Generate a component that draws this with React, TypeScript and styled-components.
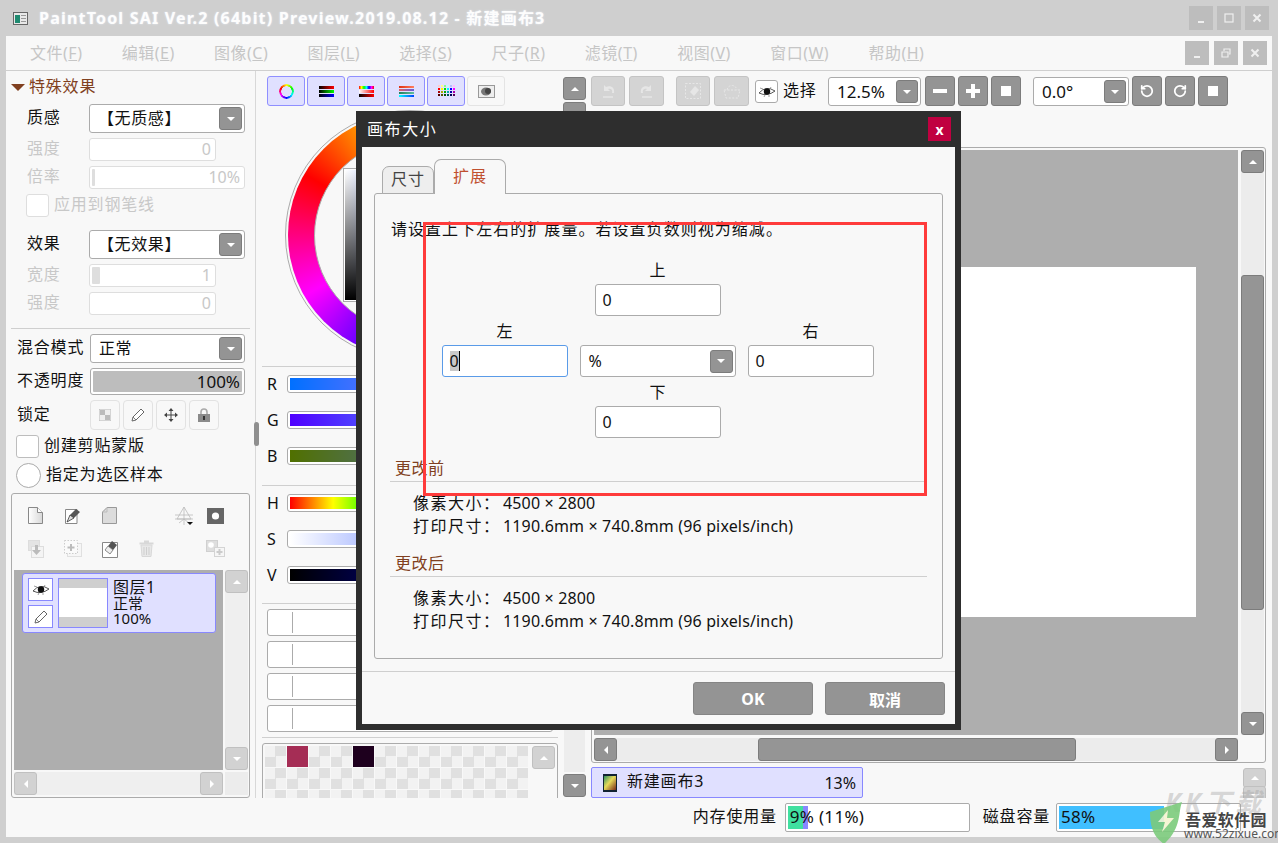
import React from "react";
import styled, { createGlobalStyle, css } from "styled-components";
import { RotateCcw, RotateCw } from "lucide-react";

const GlobalStyle = createGlobalStyle`
  * { box-sizing: border-box; }
  html, body { margin: 0; padding: 0; background: #cfcfcf; }
  body {
    font-family: "Noto Sans", "Noto Sans CJK SC", sans-serif;
    font-size: 16px;
    color: #111;
  }
`;

const line = "#ababab";
const paper = "#f8f8f8";
const btnGray = "#949494";

// ---- window frame
const Root = styled.div`
  position: relative;
  width: 1278px;
  height: 843px;
  overflow: hidden;
  padding: 0 6px 6px;
  display: flex;
  flex-direction: column;
  background: #cfcfcf;
`;
const TitleBar = styled.div`
  height: 36px;
  flex: none;
  display: flex;
  align-items: center;
  padding-left: 7px;
`;
const TitleText = styled.div`
  margin: 0 0 2px 11px;
  color: #fdfdfd;
  font-weight: 700;
  font-size: 16px;
  letter-spacing: 1.2px;
  text-shadow: 0 0 2px #e8eef8;
`;
const CaptionGroup = styled.div<{ $gap?: number; $right?: number }>`
  margin-left: auto;
  margin-right: ${(p) => p.$right ?? 3}px;
  display: flex;
  gap: ${(p) => p.$gap ?? 4}px;
`;
const CaptionBtn = styled.div`
  width: 24px;
  height: 24px;
  background: #bdbdbd;
  color: #efefef;
  display: flex;
  align-items: center;
  justify-content: center;
`;
const Client = styled.div`
  flex: 1;
  min-height: 0;
  background: ${paper};
  display: flex;
  flex-direction: column;
`;
const MenuBar = styled.div`
  height: 35px;
  flex: none;
  border-bottom: 1px solid #cfcfcf;
  display: flex;
  align-items: center;
  padding-left: 24px;
  gap: 39.25px;
  color: #c6c6c6;
  & u { text-decoration-thickness: 1px; }
`;
const MenuItem = styled.div`
  letter-spacing: 0.5px;
  margin-bottom: 2px;
`;
const Body = styled.div`
  height: 727px;
  flex: none;
  display: flex;
  overflow: hidden;
  position: relative;
`;

// ---- left panel
const LeftPanel = styled.div`
  width: 250px;
  flex: none;
  padding: 0 5px;
  border-right: 1px solid #d8d8d8;
  display: flex;
  flex-direction: column;
`;
const Row = styled.div<{ $top: number; $h: number; $indent?: number; $right?: number }>`
  margin-top: ${(p) => p.$top}px;
  height: ${(p) => p.$h}px;
  flex: none;
  display: flex;
  align-items: center;
  padding-left: ${(p) => p.$indent ?? 0}px;
  padding-right: ${(p) => p.$right ?? 0}px;
`;
const Cjk = styled.span<{ $w?: number; $off?: boolean; $color?: string }>`
  letter-spacing: 0.8px;
  white-space: nowrap;
  margin-bottom: 5px;
  ${(p) => p.$w && css`width: ${p.$w}px; flex: none;`}
  color: ${(p) => (p.$off ? "#c8c8c8" : p.$color ?? "#111")};
`;
const Triangle = styled.i`
  width: 0;
  height: 0;
  border-left: 7px solid transparent;
  border-right: 7px solid transparent;
  border-top: 7px solid #804020;
  margin-right: 4px;
`;
const SelectBox = styled.div<{ $w?: number; $ml?: number; $h?: number }>`
  ${(p) => (p.$w ? css`width: ${p.$w}px; flex: none;` : css`flex: 1;`)}
  margin-left: ${(p) => p.$ml ?? 0}px;
  height: ${(p) => (p.$h ? `${p.$h}px` : "100%")};
  background: #fff;
  border: 1px solid ${line};
  border-radius: 3px;
  display: flex;
  align-items: center;
  padding: 0 2px 0 8px;
`;
const SelectValue = styled.span<{ $cjk?: boolean }>`
  flex: 1;
  white-space: nowrap;
  ${(p) => p.$cjk && css`margin-bottom: 4px; letter-spacing: 0.6px;`}
`;
const DropBtn = styled.div<{ $w?: number }>`
  width: ${(p) => p.$w ?? 23}px;
  height: 23px;
  flex: none;
  background: ${btnGray};
  border: 1px solid #7c7c7c;
  border-radius: 3px;
  display: flex;
  align-items: center;
  justify-content: center;
  &::after {
    content: "";
    border-left: 4px solid transparent;
    border-right: 4px solid transparent;
    border-top: 4px solid #fff;
  }
`;
const ValueBar = styled.div<{ $w?: number; $strong?: boolean }>`
  ${(p) => (p.$w ? css`width: ${p.$w}px; flex: none;` : css`flex: 1;`)}
  height: 100%;
  border: 1px solid ${(p) => (p.$strong ? line : "#dedede")};
  border-radius: 3px;
  background: #fff;
  padding: 2px;
  position: relative;
  display: flex;
  align-items: center;
  justify-content: flex-end;
  color: ${(p) => (p.$strong ? "#111" : "#c8c8c8")};
  font-size: 16px;
`;
const BarFill = styled.div<{ $color: string; $w: string }>`
  position: absolute;
  left: 2px;
  top: 2px;
  bottom: 2px;
  width: ${(p) => p.$w};
  background: ${(p) => p.$color};
  border-radius: 1px;
`;
const BarText = styled.span<{ $big?: boolean }>`
  position: relative;
  padding-right: 2px;
  margin-bottom: 1px;
  ${(p) => p.$big && css`font-size: 17px;`}
`;
const CheckBox = styled.div<{ $off?: boolean }>`
  width: 23px;
  height: 23px;
  flex: none;
  background: #fff;
  border: 1px solid ${(p) => (p.$off ? "#dedede" : "#bdbdbd")};
  border-radius: 3px;
  margin-right: 5px;
`;
const RadioBox = styled.div`
  width: 25px;
  height: 25px;
  flex: none;
  background: #fff;
  border: 1px solid #aaa;
  border-radius: 50%;
  margin-right: 5px;
`;
const Separator = styled.div<{ $top: number }>`
  margin-top: ${(p) => p.$top}px;
  height: 1px;
  flex: none;
  background: #cfcfcf;
`;
const LockBtn = styled.div`
  width: 30px;
  height: 30px;
  background: ${paper};
  border: 1px solid #e2e2e2;
  border-radius: 4px;
  display: flex;
  align-items: center;
  justify-content: center;
  margin-right: 3px;
`;
const Splitter = styled.div`
  position: absolute;
  left: 248px;
  top: 351px;
  width: 5px;
  height: 24px;
  border-radius: 3px;
  background: #8f8f8f;
`;
const LayerPanel = styled.div`
  margin-top: 5px;
  height: 305px;
  flex: none;
  border: 1px solid ${line};
  border-radius: 3px;
  padding: 5px 2px 0;
  display: flex;
  flex-direction: column;
`;
const IconRow = styled.div`
  height: 33px;
  flex: none;
  display: grid;
  grid-template-columns: repeat(5, 37px) 1fr;
  justify-items: center;
  align-items: center;
  padding-left: 3px;
`;
const IconSlot = styled.div<{ $last?: boolean }>`
  width: 20px;
  height: 20px;
  display: flex;
  align-items: center;
  justify-content: center;
  ${(p) => p.$last && css`margin-left: -19px;`}
`;
const LayerGrid = styled.div`
  margin-top: 5px;
  flex: 1;
  display: grid;
  grid-template-columns: 209px 1fr;
  grid-template-rows: 200px 1fr;
  column-gap: 2px;
  row-gap: 2px;
  padding-bottom: 2px;
`;
const LayerList = styled.div`
  background: #aeaeae;
  padding: 3px 7px 3px 8px;
`;
const LayerItem = styled.div`
  height: 60px;
  background: #e0e0ff;
  border: 1px solid #8888ff;
  border-radius: 3px;
  padding: 4px 5px;
  display: flex;
`;
const LayerBtns = styled.div`
  width: 25px;
  flex: none;
  display: flex;
  flex-direction: column;
  gap: 4px;
`;
const LayerBtn = styled.div`
  height: 23px;
  background: #fff;
  border: 1px solid #8888ff;
  display: flex;
  align-items: center;
  justify-content: center;
`;
const Thumb = styled.div`
  width: 50px;
  height: 50px;
  margin-left: 5px;
  flex: none;
  border: 1px solid #8888ff;
  background: linear-gradient(#cfcfcf 0 9px, #fff 9px 38px, #cfcfcf 38px);
`;
const LayerText = styled.div`
  margin-left: 5px;
  line-height: 15px;
  font-size: 15px;
`;
const LayerName = styled.div`
  font-size: 16px;
  line-height: 18px;
  letter-spacing: 0.5px;
`;

// ---- scrollbars
const ArrowBtn = styled.div<{ $dir: "up" | "down" | "left" | "right"; $dark?: boolean; $w?: number; $h?: number }>`
  width: ${(p) => p.$w ?? 23}px;
  height: ${(p) => p.$h ?? 23}px;
  flex: none;
  border-radius: 3px;
  background: ${(p) => (p.$dark ? btnGray : "#d2d2d2")};
  border: 1px solid ${(p) => (p.$dark ? "#7c7c7c" : "#c0c0c0")};
  display: flex;
  align-items: center;
  justify-content: center;
  &::after {
    content: "";
    ${(p) =>
      p.$dir === "up"
        ? css`border-left: 4px solid transparent; border-right: 4px solid transparent; border-bottom: 4px solid #fff;`
        : p.$dir === "down"
        ? css`border-left: 4px solid transparent; border-right: 4px solid transparent; border-top: 4px solid #fff;`
        : p.$dir === "left"
        ? css`border-top: 4px solid transparent; border-bottom: 4px solid transparent; border-right: 4px solid #fff;`
        : css`border-top: 4px solid transparent; border-bottom: 4px solid transparent; border-left: 4px solid #fff;`}
  }
`;
const VScroll = styled.div`
  display: flex;
  flex-direction: column;
  background: #efefef;
  justify-content: space-between;
`;
const HScroll = styled.div`
  display: flex;
  background: #efefef;
  justify-content: space-between;
`;
const Corner = styled.div`
  background: #ececec;
`;

// ---- colour panel
const ColorPanel = styled.div`
  width: 305px;
  flex: none;
  padding: 0 5px 0 4px;
  margin-left: 2px;
  display: flex;
  flex-direction: column;
`;
const ColorTabs = styled.div`
  margin-top: 5px;
  height: 30px;
  flex: none;
  display: flex;
  gap: 2px;
  padding-left: 5px;
`;
const ColorTab = styled.div<{ $on?: boolean }>`
  width: 38px;
  height: 30px;
  background: ${(p) => (p.$on ? "#e0e0ff" : paper)};
  border: 1px solid ${(p) => (p.$on ? "#8f8fff" : "#e4e4e4")};
  border-radius: 3px;
  display: flex;
  align-items: center;
  justify-content: center;
`;
const RingIcon = styled.div`
  width: 15px;
  height: 15px;
  border-radius: 50%;
  background: conic-gradient(#ff0, #0f0, #0ff, #00f, #f0f, #f00, #ff0);
  mask: radial-gradient(circle, transparent 5px, #000 5.5px);
`;
const WheelHolder = styled.div`
  margin-top: 4px;
  height: 250px;
  flex: none;
  display: flex;
  justify-content: center;
`;
const WheelEdge = styled.div`
  width: 250px;
  height: 250px;
  border-radius: 50%;
  border: 1px solid ${line};
  padding: 2px;
`;
const WheelRing = styled.div`
  width: 100%;
  height: 100%;
  border-radius: 50%;
  background: conic-gradient(from 300deg, #f00, #ff0, #0f0, #0ff, #00f, #f0f, #f00);
  display: flex;
  align-items: center;
  justify-content: center;
`;
const WheelHole = styled.div`
  width: 193px;
  height: 193px;
  border-radius: 50%;
  background: ${paper};
  border: 1px solid ${line};
  display: flex;
  align-items: center;
  justify-content: center;
`;
const ColorSquare = styled.div`
  width: 134px;
  height: 134px;
  border: 1px solid ${line};
  padding: 1px;
  background: #fff;
`;
const ColorSquareFill = styled.div`
  width: 100%;
  height: 100%;
  background: linear-gradient(to bottom, transparent, #000), linear-gradient(to right, #fff, #0040ff);
`;
const SliderRow = styled.div<{ $top: number }>`
  margin-top: ${(p) => p.$top}px;
  height: 18px;
  flex: none;
  display: flex;
  align-items: center;
  padding-left: 5px;
`;
const SliderLabel = styled.span`
  width: 20px;
  flex: none;
  font-size: 16px;
`;
const SliderTrack = styled.div<{ $grad: string }>`
  width: 265px;
  height: 18px;
  border: 1px solid ${line};
  border-radius: 3px;
  padding: 2px;
  background: #fff;
  &::after {
    content: "";
    display: block;
    height: 100%;
    background: ${(p) => p.$grad};
  }
`;
const ToolSlider = styled.div<{ $top: number }>`
  margin: ${(p) => p.$top}px 5px 0 5px;
  height: 27px;
  flex: none;
  background: #fff;
  border: 1px solid ${line};
  border-radius: 3px;
  padding: 2px 0 2px 24px;
  &::before {
    content: "";
    display: block;
    width: 1px;
    height: 100%;
    background: ${line};
  }
`;
const SwatchPanel = styled.div`
  margin-top: 5px;
  height: 70px;
  flex: none;
  border: 1px solid ${line};
  border-radius: 3px;
  padding: 2px;
  display: flex;
  justify-content: space-between;
`;
const SwatchGrid = styled.div`
  width: 266px;
  display: grid;
  grid-template-columns: repeat(12, 22px);
  grid-auto-rows: 22px;
`;
const Swatch = styled.div<{ $color?: string }>`
  margin: 0 1px 1px 0;
  background: ${(p) => p.$color ?? "repeating-conic-gradient(#e0e0e0 0 25%, #f2f2f2 0 50%) 0 0 / 21px 21px"};
`;

// ---- tool strip
const ToolStrip = styled.div`
  width: 23px;
  flex: none;
  padding: 6px 0 1px;
  display: flex;
  flex-direction: column;
  gap: 2px;
`;
const StripTrack = styled.div`
  flex: 1;
  margin: 0 1px;
  background: #ededed;
`;

// ---- canvas column
const CanvasColumn = styled.div`
  flex: 1;
  min-width: 0;
  padding: 0 6px 0 5px;
  display: flex;
  flex-direction: column;
`;
const ToolRow = styled.div`
  margin-top: 5px;
  height: 30px;
  flex: none;
  display: flex;
  align-items: flex-end;
`;
const ToolBtn = styled.div<{ $w?: number; $ml?: number; $off?: boolean }>`
  width: ${(p) => p.$w ?? 30}px;
  height: 30px;
  flex: none;
  margin-left: ${(p) => p.$ml ?? 0}px;
  border-radius: 3px;
  background: ${(p) => (p.$off ? "#d4d4d4" : btnGray)};
  border: 1px solid ${(p) => (p.$off ? "#c4c4c4" : "#7c7c7c")};
  color: ${(p) => (p.$off ? "#e6e6e6" : "#fff")};
  display: flex;
  align-items: center;
  justify-content: center;
`;
const Flip = styled.span`
  display: flex;
  transform: scaleX(-1);
`;
const EyeBtn = styled.div`
  width: 23px;
  height: 23px;
  flex: none;
  margin: 0 0 3px 6px;
  background: #fff;
  border: 1px solid #aaa;
  border-radius: 3px;
  display: flex;
  align-items: center;
  justify-content: center;
`;
const ToolLabel = styled(Cjk)`
  margin: 0 0 5px 5px;
  width: 45px;
  flex: none;
`;
const SmallSelect = styled(SelectBox)`
  height: 29px;
  font-size: 17px;
`;
const CanvasFrame = styled.div`
  margin-top: 41px;
  height: 616px;
  flex: none;
  border: 1px solid ${line};
  border-radius: 3px;
  padding: 2px;
  display: grid;
  grid-template-columns: 644px 23px;
  grid-template-rows: 585px 23px;
  column-gap: 3px;
  row-gap: 3px;
`;
const CanvasArea = styled.div`
  background: #aeaeae;
  display: flex;
  align-items: center;
  justify-content: center;
  padding-bottom: 2px;
`;
const Sheet = styled.div`
  width: 560px;
  height: 350px;
  background: #fff;
`;
const ThumbBar = styled.div`
  background: #959595;
  border: 1px solid #7c7c7c;
  border-radius: 3px;
`;
const VThumb = styled(ThumbBar)`
  position: absolute;
  top: 125px;
  left: 0;
  width: 23px;
  height: 335px;
`;
const HThumb = styled(ThumbBar)`
  position: absolute;
  left: 164px;
  top: 0;
  width: 318px;
  height: 23px;
`;
const TrackBox = styled.div`
  position: relative;
  display: flex;
  justify-content: space-between;
  background: #ececec;
`;
const TrackBoxV = styled(TrackBox)`
  flex-direction: column;
`;
const DocRow = styled.div`
  margin-top: 4px;
  flex: 1;
  display: flex;
  justify-content: space-between;
  overflow: hidden;
`;
const DocTab = styled.div`
  width: 272px;
  height: 31px;
  background: #e0e0ff;
  border: 1px solid #8888ff;
  border-radius: 2px;
  display: flex;
  align-items: center;
  padding: 0 6px 0 11px;
`;
const DocName = styled(Cjk)`
  margin-left: 10px;
  flex: 1;
`;
const DocScroll = styled.div`
  display: flex;
  flex-direction: column;
  margin-top: 1px;
  & > * + * { margin-top: -2px; }
`;

// ---- status bar
const StatusBar = styled.div`
  flex: 1;
  display: flex;
  align-items: center;
  justify-content: flex-end;
  padding-right: 31px;
`;
const MeterBox = styled.div<{ $ml: number }>`
  width: 185px;
  height: 29px;
  margin-left: ${(p) => p.$ml}px;
  margin-right: 13px;
  background: #fff;
  border: 1px solid ${line};
  border-radius: 2px;
  padding: 2px;
  display: flex;
  position: relative;
  &:last-child { margin-right: 0; }
`;
const MeterPart = styled.div<{ $color: string; $w: number }>`
  width: ${(p) => p.$w}px;
  background: ${(p) => p.$color};
`;
const MeterText = styled.span`
  position: absolute;
  left: 4px;
  top: 1px;
  font-size: 17px;
  letter-spacing: 0.3px;
`;

// ---- dialog
const Dialog = styled.div`
  position: absolute;
  left: 356px;
  top: 111px;
  width: 605px;
  height: 619px;
  background: #2e2e2e;
  padding: 0 6px 6px;
  display: flex;
  flex-direction: column;
`;
const DialogHead = styled.div`
  height: 36px;
  flex: none;
  display: flex;
  align-items: center;
  padding-left: 5px;
  color: #fff;
`;
const DialogTitle = styled(Cjk)`
  margin-bottom: 2px;
  letter-spacing: 1.6px;
`;
const DialogClose = styled.div`
  margin-left: auto;
  margin-right: 4px;
  width: 23px;
  height: 24px;
  background: #c00040;
  color: #fff;
  font-weight: 700;
  font-size: 14px;
  display: flex;
  align-items: center;
  justify-content: center;
`;
const DialogBody = styled.div`
  flex: 1;
  background: ${paper};
  display: flex;
  flex-direction: column;
`;
const TabRow = styled.div`
  margin: 12px 0 0 20px;
  height: 35px;
  flex: none;
  display: flex;
  align-items: flex-end;
  position: relative;
  z-index: 1;
`;
const Tab = styled.div<{ $on?: boolean }>`
  width: ${(p) => (p.$on ? 72 : 52)}px;
  height: ${(p) => (p.$on ? 35 : 28)}px;
  padding-bottom: 4px;
  background: ${(p) => (p.$on ? paper : "#eeeeee")};
  border: 1px solid ${line};
  border-bottom: ${(p) => (p.$on ? "none" : `1px solid ${line}`)};
  border-radius: 7px 7px 0 0;
  display: flex;
  align-items: center;
  justify-content: center;
  letter-spacing: 1px;
  color: ${(p) => (p.$on ? "#c05030" : "#444")};
`;
const Pane = styled.div`
  margin: -1px 12px 0;
  height: 466px;
  flex: none;
  border: 1px solid ${line};
  border-radius: 3px;
  padding: 23px 15px 0;
`;
const Hint = styled(Cjk)`
  display: block;
  margin: 0 0 2px;
  line-height: 24px;
  padding-left: 1px;
  letter-spacing: 1.04px;
`;
const ExpandGrid = styled.div`
  margin-top: 19px;
  display: grid;
  grid-template-columns: 126px 156px 126px;
  column-gap: 12px;
  row-gap: 5px;
  justify-content: center;
  padding-right: 2px;
`;
const Field = styled.div<{ $col: number }>`
  grid-column: ${(p) => p.$col};
  display: flex;
  flex-direction: column;
  gap: 4px;
`;
const FieldLabel = styled.div`
  height: 20px;
  line-height: 20px;
  text-align: center;
`;
const NumInput = styled.div<{ $focus?: boolean; $narrow?: boolean }>`
  height: 32px;
  background: #fff;
  border: 1px solid ${(p) => (p.$focus ? "#5a9be8" : line)};
  border-radius: 3px;
  padding-left: 7px;
  display: flex;
  align-items: center;
  ${(p) => p.$narrow && css`width: 126px; margin-left: 15px;`}
`;
const Selected = styled.span`
  background: #c9c9c9;
  border-right: 1px solid #000;
  line-height: 20px;
`;
const SectionHead = styled.div<{ $top: number }>`
  margin-top: ${(p) => p.$top}px;
  height: 26px;
  line-height: 24px;
  border-bottom: 1px solid #cfcfcf;
  padding-left: 5px;
  color: #804020;
  letter-spacing: 0.5px;
`;
const InfoGroup = styled.div`
  margin-top: 10px;
`;
const InfoRow = styled.div`
  height: 23px;
  line-height: 23px;
  padding-left: 23px;
  display: flex;
  white-space: nowrap;
`;
const InfoKey = styled(Cjk)`
  width: 90px;
  flex: none;
  margin: 0;
  letter-spacing: 1.5px;
`;
const InfoValue = styled.span`
  letter-spacing: 0.15px;
`;
const DialogFoot = styled.div`
  margin-top: 12px;
  flex: 1;
  border-top: 1px solid #cfcfcf;
  display: flex;
  justify-content: flex-end;
  gap: 12px;
  padding: 10px 10px 0 0;
`;
const DialogBtn = styled.div`
  width: 120px;
  height: 33px;
  background: ${btnGray};
  border: 1px solid #858585;
  border-radius: 3px;
  color: #fff;
  font-weight: 700;
  display: flex;
  align-items: center;
  justify-content: center;
`;

// ---- overlays in the picture itself
const RedFrame = styled.div`
  position: absolute;
  left: 423px;
  top: 222px;
  width: 504px;
  height: 274px;
  border: 3px solid #ff3b3b;
  pointer-events: none;
`;
const Watermark = styled.div`
  position: absolute;
  right: 0;
  bottom: 0;
  width: 130px;
  height: 56px;
  pointer-events: none;
`;
const WmFaint = styled.div`
  position: absolute;
  left: 17px;
  top: 0;
  font-size: 26px;
  line-height: 30px;
  font-style: italic;
  font-weight: 700;
  letter-spacing: 4px;
  color: rgba(165, 165, 165, 0.42);
  white-space: nowrap;
`;
const WmName = styled.div`
  position: absolute;
  left: 37px;
  top: 22px;
  font-size: 16px;
  line-height: 22px;
  font-weight: 700;
  letter-spacing: 0.4px;
  color: #444;
  white-space: nowrap;
`;
const WmUrl = styled.div`
  position: absolute;
  left: 36px;
  top: 40px;
  font-size: 12px;
  line-height: 14px;
  color: #555;
  white-space: nowrap;
`;
const WmShield = styled.svg`
  position: absolute;
  left: 0;
  top: 15px;
`;

// ---- drawings
const AppIcon = () => (
  <svg width="15" height="13" viewBox="0 0 15 13">
    <rect x="0.5" y="0.5" width="14" height="12" fill="#e8e8e8" stroke="#666" />
    <rect x="2" y="3" width="5" height="8" fill="#1f8a70" />
    <rect x="8" y="3" width="5" height="1" fill="#999" />
    <rect x="8" y="6" width="5" height="1" fill="#999" />
    <rect x="8" y="9" width="5" height="1" fill="#999" />
  </svg>
);
const Eye = () => (
  <svg width="18" height="12" viewBox="0 0 18 12">
    <path d="M1 7Q8 -1 17 5Q9 11 1 7Z" fill="#fff" stroke="#444" strokeWidth="0.9" />
    <circle cx="9" cy="5.5" r="3.2" fill="#111" />
    <path d="M2 2L5 3M13 1L12 3M6 11L7 9M11 11L11 9" stroke="#777" strokeWidth="0.7" />
  </svg>
);
const Pencil = ({ color = "#666" }: { color?: string }) => (
  <svg width="16" height="16" viewBox="0 0 16 16">
    <path d="M2 14L3 10L11 2L14 5L6 13Z" fill="#fff" stroke={color} strokeWidth="1" />
    <path d="M3 10L6 13" stroke={color} strokeWidth="0.8" />
  </svg>
);
const PageShape = "M1.5 0.5H10.5L15.5 5.5V16.5H1.5Z";
const NewPage = () => (
  <svg width="17" height="17" viewBox="0 0 17 17">
    <defs>
      <linearGradient id="pg" x1="0" y1="0" x2="1" y2="0">
        <stop offset="0" stopColor="#fff" />
        <stop offset="1" stopColor="#d8d8d8" />
      </linearGradient>
    </defs>
    <path d={PageShape} fill="url(#pg)" stroke="#888" />
    <path d="M10.5 0.5V5.5H15.5" fill="#fff" stroke="#888" />
  </svg>
);
const PenPage = () => (
  <svg width="18" height="17" viewBox="0 0 18 17">
    <path d="M1.5 2.5H13V16.5H1.5Z" fill="#fff" stroke="#888" />
    <path d="M3 15L6 8L12 2L16 5L10 11Z" fill="#555" />
    <path d="M3 15L6 8L10 11Z" fill="#ddd" stroke="#333" strokeWidth="0.7" />
  </svg>
);
const FolderPage = () => (
  <svg width="15" height="17" viewBox="0 0 15 17">
    <path d="M5 0.5H14.5V16.5H0.5V5Z" fill="#dcdcdc" stroke="#999" />
    <path d="M5 0.5V5H0.5" fill="none" stroke="#bbb" />
  </svg>
);
const Perspective = () => (
  <svg width="20" height="20" viewBox="0 0 20 20">
    <path d="M10 1L3 13H17ZM10 1V19M1 9H19M1 13H19M5 17L10 13L15 17" fill="none" stroke="#bbb" strokeWidth="0.8" />
    <path d="M13 16H19L16 19Z" fill="#111" />
  </svg>
);
const MaskIcon = () => (
  <svg width="17" height="16" viewBox="0 0 17 16">
    <rect width="17" height="16" fill="#666" />
    <circle cx="8.5" cy="8" r="3.6" fill="#fff" />
  </svg>
);
const MergeIcon = () => (
  <svg width="16" height="18" viewBox="0 0 16 18">
    <rect x="0.5" y="0.5" width="11" height="10" fill="#e4e4e4" stroke="#ddd" />
    <rect x="3.5" y="6.5" width="12" height="11" fill="#f4f4f4" stroke="#ddd" />
    <path d="M7 5H10V10H13L8.5 15L4 10H7Z" fill="#bbb" />
  </svg>
);
const AddIcon = () => (
  <svg width="18" height="17" viewBox="0 0 18 17">
    <rect x="3.5" y="3.5" width="14" height="13" fill="#f6f6f6" stroke="#e0e0e0" />
    <rect x="0.5" y="0.5" width="13" height="13" fill="#fafafa" stroke="#ccc" strokeDasharray="1.5 1.5" />
    <path d="M7 4V11M3.5 7.5H10.5" stroke="#bbb" strokeWidth="2" />
  </svg>
);
const EraserPage = () => (
  <svg width="16" height="18" viewBox="0 0 16 18">
    <path d="M0.5 2.5H15.5V17.5H0.5Z" fill="#fff" stroke="#888" />
    <path d="M3 10L10 1L15 5L8 14Z" fill="#555" />
    <path d="M3 10L6 6L11 10L8 14Z" fill="#eee" stroke="#777" strokeWidth="0.7" />
  </svg>
);
const TrashIcon = () => (
  <svg width="15" height="17" viewBox="0 0 15 17">
    <path d="M5 1.5H10M0.5 3.5H14.5" stroke="#d8d8d8" strokeWidth="2" />
    <path d="M2 5H13L12 16.5H3Z" fill="#e8e8e8" stroke="#d8d8d8" />
    <path d="M5 7V15M7.5 7V15M10 7V15" stroke="#cfcfcf" />
  </svg>
);
const CopyPlus = () => (
  <svg width="19" height="17" viewBox="0 0 19 17">
    <rect x="0.5" y="0.5" width="11" height="11" fill="#dedede" stroke="#d0d0d0" />
    <circle cx="5" cy="5" r="2.8" fill="#fff" />
    <rect x="8.5" y="7.5" width="10" height="9" fill="#f6f6f6" stroke="#d4d4d4" />
    <path d="M13.5 9V15M10.5 12H16.5" stroke="#ccc" strokeWidth="2" />
  </svg>
);
const LockTransparent = () => (
  <svg width="12" height="12" viewBox="0 0 12 12">
    <rect width="12" height="12" fill="#eee" stroke="#bbb" />
    <rect x="1" y="1" width="5" height="5" fill="#bbb" />
    <rect x="6" y="6" width="5" height="5" fill="#bbb" />
  </svg>
);
const MoveIcon = () => (
  <svg width="14" height="14" viewBox="0 0 14 14">
    <path d="M7 0L9.5 3H4.5ZM7 14L4.5 11H9.5ZM0 7L3 4.5V9.5ZM14 7L11 9.5V4.5Z" fill="#444" />
    <path d="M7 2V12M2 7H12" stroke="#444" />
  </svg>
);
const PadLock = () => (
  <svg width="12" height="14" viewBox="0 0 12 14">
    <path d="M3 6V4a3 3 0 0 1 6 0V6" fill="none" stroke="#aaa" strokeWidth="1.6" />
    <rect y="6" width="12" height="8" fill="#8a8a8a" />
    <rect x="5" y="8" width="2" height="4" fill="#333" />
  </svg>
);
type BarDef = { id: string; stops: string[] };
const GradBars = ({ rows }: { rows: BarDef[] }) => {
  const step = rows.length > 3 ? 3 : 4;
  return (
    <svg width="15" height="11" viewBox="0 0 15 11">
      <defs>
        {rows.map((r) => (
          <linearGradient key={r.id} id={r.id}>
            {r.stops.map((s, i) => (
              <stop key={i} offset={i / (r.stops.length - 1)} stopColor={s} />
            ))}
          </linearGradient>
        ))}
      </defs>
      {rows.map((r, i) => (
        <rect key={r.id} y={i * step} width="15" height={step - 1} fill={`url(#${r.id})`} />
      ))}
    </svg>
  );
};
const gridColors = ["#fcc", "#ff8", "#8f8", "#bff", "#bbf", "#fbf", "#f00", "#ff0", "#0d0", "#0ff", "#00f", "#f0f", "#a00", "#aa0", "#0a0", "#0aa", "#00a", "#a0a", "#500", "#550", "#050", "#055", "#005", "#505"];
const DotsIcon = () => (
  <svg width="17" height="12" viewBox="0 0 17 12">
    {gridColors.map((c, i) => (
      <rect key={i} x={(i % 6) * 3} y={Math.floor(i / 6) * 3} width="2" height="2" fill={c} />
    ))}
  </svg>
);
const BlobIcon = () => (
  <svg width="17" height="13" viewBox="0 0 17 13">
    <rect x="0.5" y="0.5" width="16" height="12" fill="#eee" stroke="#999" />
    <ellipse cx="8" cy="6.5" rx="5" ry="4" fill="#777" />
    <ellipse cx="10" cy="6" rx="3" ry="3" fill="#444" />
  </svg>
);
const UndoIcon = () => (
  <svg width="16" height="16" viewBox="0 0 16 16">
    <path d="M4 2L4 8L10 8L8 6C11 5 13 7 12 10L14 10C15 5 11 2 6 4Z" fill="currentColor" />
    <path d="M3 14H13" stroke="currentColor" strokeWidth="1.5" />
  </svg>
);
const DashedEraser = () => (
  <svg width="18" height="18" viewBox="0 0 18 18">
    <rect x="1.5" y="1.5" width="15" height="15" fill="none" stroke="currentColor" strokeDasharray="2 1.5" />
    <path d="M6 10L11 4L15 8L10 14Z" fill="currentColor" />
  </svg>
);
const DashedBag = () => (
  <svg width="20" height="16" viewBox="0 0 20 16">
    <path d="M2 7H18L16 15H4ZM5 7C6 1 14 1 15 7" fill="none" stroke="currentColor" strokeDasharray="2 1.5" />
  </svg>
);
const Square = () => (
  <svg width="10" height="10" viewBox="0 0 10 10">
    <rect width="10" height="10" fill="currentColor" />
  </svg>
);
const WindowGlyph = ({ kind }: { kind: "min" | "max" | "restore" | "close" }) => (
  <svg width="10" height="10" viewBox="0 0 10 10">
    {kind === "min" && <rect x="2" y="8" width="6" height="2" fill="currentColor" />}
    {kind === "max" && <rect x="1" y="1" width="8" height="8" fill="none" stroke="currentColor" strokeWidth="1.2" />}
    {kind === "restore" && (
      <path d="M1 4H7V9H1ZM3 3V1H9V6H8" fill="none" stroke="currentColor" strokeWidth="1.2" />
    )}
    {kind === "close" && <path d="M1.5 1.5L8.5 8.5M8.5 1.5L1.5 8.5" stroke="currentColor" strokeWidth="2" />}
  </svg>
);
const DocIcon = () => (
  <svg width="14" height="18" viewBox="0 0 14 18">
    <defs>
      <linearGradient id="doc" x1="0" y1="0" x2="1" y2="1">
        <stop offset="0" stopColor="#2d8f5e" />
        <stop offset="0.45" stopColor="#e6d95a" />
        <stop offset="1" stopColor="#7a2a18" />
      </linearGradient>
    </defs>
    <rect width="14" height="18" fill="#123" />
    <rect x="1" y="2" width="12" height="14" fill="url(#doc)" />
  </svg>
);

const menus: [string, string][] = [
  ["文件", "F"], ["编辑", "E"], ["图像", "C"], ["图层", "L"], ["选择", "S"],
  ["尺子", "R"], ["滤镜", "T"], ["视图", "V"], ["窗口", "W"], ["帮助", "H"],
];
const rainbow = ["#f00", "#ff0", "#0f0", "#0ff", "#00f", "#f0f", "#f00"];
const sliders = [
  { top: 8, label: "R", grad: "linear-gradient(to right, #0070ff, #ff70ff)" },
  { top: 18, label: "G", grad: "linear-gradient(to right, #5000ff, #50ffff)" },
  { top: 18, label: "B", grad: "linear-gradient(to right, #507000, #5070ff)" },
];
const hsv = [
  { top: 8, label: "H", grad: `linear-gradient(to right, ${rainbow.join(",")})` },
  { top: 18, label: "S", grad: "linear-gradient(to right, #fff, #0030ff)" },
  { top: 18, label: "V", grad: "linear-gradient(to right, #000, #0000ff)" },
];
const swatches: Record<number, string> = { 1: "#a52d55", 4: "#1e001e" };

export default function App() {
  return (
    <>
      <GlobalStyle />
      <Root>
        <TitleBar>
          <AppIcon />
          <TitleText>PaintTool SAI Ver.2 (64bit) Preview.2019.08.12 - 新建画布3</TitleText>
          <CaptionGroup>
            <CaptionBtn><WindowGlyph kind="min" /></CaptionBtn>
            <CaptionBtn><WindowGlyph kind="max" /></CaptionBtn>
            <CaptionBtn><WindowGlyph kind="close" /></CaptionBtn>
          </CaptionGroup>
        </TitleBar>
        <Client>
          <MenuBar>
            {menus.map(([name, key]) => (
              <MenuItem key={key}>{name}(<u>{key}</u>)</MenuItem>
            ))}
            <CaptionGroup $gap={5} $right={5}>
              <CaptionBtn><WindowGlyph kind="min" /></CaptionBtn>
              <CaptionBtn><WindowGlyph kind="restore" /></CaptionBtn>
              <CaptionBtn><WindowGlyph kind="close" /></CaptionBtn>
            </CaptionGroup>
          </MenuBar>
          <Body>
            <LeftPanel>
              <Row $top={5} $h={22}>
                <Triangle />
                <Cjk $color="#804020">特殊效果</Cjk>
              </Row>
              <Row $top={6} $h={29} $indent={16} $right={5}>
                <Cjk $w={62}>质感</Cjk>
                <SelectBox><SelectValue $cjk>【无质感】</SelectValue><DropBtn /></SelectBox>
              </Row>
              <Row $top={5} $h={23} $indent={16}>
                <Cjk $w={62} $off>强度</Cjk>
                <ValueBar $w={127}><BarText>0</BarText></ValueBar>
              </Row>
              <Row $top={5} $h={23} $indent={16} $right={5}>
                <Cjk $w={62} $off>倍率</Cjk>
                <ValueBar><BarFill $color="#dedede" $w="3px" /><BarText>10%</BarText></ValueBar>
              </Row>
              <Row $top={5} $h={23} $indent={15}>
                <CheckBox $off />
                <Cjk $off>应用到钢笔线</Cjk>
              </Row>
              <Row $top={13} $h={29} $indent={16} $right={5}>
                <Cjk $w={62}>效果</Cjk>
                <SelectBox><SelectValue $cjk>【无效果】</SelectValue><DropBtn /></SelectBox>
              </Row>
              <Row $top={5} $h={23} $indent={16}>
                <Cjk $w={62} $off>宽度</Cjk>
                <ValueBar $w={127}><BarFill $color="#dedede" $w="8px" /><BarText>1</BarText></ValueBar>
              </Row>
              <Row $top={5} $h={23} $indent={16}>
                <Cjk $w={62} $off>强度</Cjk>
                <ValueBar $w={127}><BarText>0</BarText></ValueBar>
              </Row>
              <Separator $top={13} />
              <Row $top={5} $h={29} $indent={6} $right={5}>
                <Cjk $w={73}>混合模式</Cjk>
                <SelectBox><SelectValue $cjk>正常</SelectValue><DropBtn /></SelectBox>
              </Row>
              <Row $top={5} $h={27} $indent={6} $right={5}>
                <Cjk $w={73}>不透明度</Cjk>
                <ValueBar $strong><BarFill $color="#bdbdbd" $w="calc(100% - 4px)" /><BarText $big>100%</BarText></ValueBar>
              </Row>
              <Row $top={5} $h={30} $indent={6}>
                <Cjk $w={73}>锁定</Cjk>
                <LockBtn><LockTransparent /></LockBtn>
                <LockBtn><Pencil /></LockBtn>
                <LockBtn><MoveIcon /></LockBtn>
                <LockBtn><PadLock /></LockBtn>
              </Row>
              <Row $top={5} $h={23} $indent={5}>
                <CheckBox />
                <Cjk>创建剪贴蒙版</Cjk>
              </Row>
              <Row $top={5} $h={25} $indent={5}>
                <RadioBox />
                <Cjk>指定为选区样本</Cjk>
              </Row>
              <LayerPanel>
                <IconRow>
                  <IconSlot><NewPage /></IconSlot>
                  <IconSlot><PenPage /></IconSlot>
                  <IconSlot><FolderPage /></IconSlot>
                  <span />
                  <IconSlot><Perspective /></IconSlot>
                  <IconSlot $last><MaskIcon /></IconSlot>
                </IconRow>
                <IconRow>
                  <IconSlot><MergeIcon /></IconSlot>
                  <IconSlot><AddIcon /></IconSlot>
                  <IconSlot><EraserPage /></IconSlot>
                  <IconSlot><TrashIcon /></IconSlot>
                  <span />
                  <IconSlot $last><CopyPlus /></IconSlot>
                </IconRow>
                <LayerGrid>
                  <LayerList>
                    <LayerItem>
                      <LayerBtns>
                        <LayerBtn><Eye /></LayerBtn>
                        <LayerBtn><Pencil /></LayerBtn>
                      </LayerBtns>
                      <Thumb />
                      <LayerText>
                        <LayerName>图层1</LayerName>
                        <div>正常</div>
                        <div>100%</div>
                      </LayerText>
                    </LayerItem>
                  </LayerList>
                  <VScroll>
                    <ArrowBtn $dir="up" />
                    <ArrowBtn $dir="down" />
                  </VScroll>
                  <HScroll>
                    <ArrowBtn $dir="left" />
                    <ArrowBtn $dir="right" />
                  </HScroll>
                  <Corner />
                </LayerGrid>
              </LayerPanel>
            </LeftPanel>
            <Splitter />

            <ColorPanel>
              <ColorTabs>
                <ColorTab $on><RingIcon /></ColorTab>
                <ColorTab $on>
                  <GradBars rows={[
                    { id: "a1", stops: ["#000", "#f00"] },
                    { id: "a2", stops: ["#000", "#0f0"] },
                    { id: "a3", stops: ["#000", "#00f"] },
                  ]} />
                </ColorTab>
                <ColorTab $on>
                  <GradBars rows={[
                    { id: "b1", stops: rainbow },
                    { id: "b2", stops: ["#fff", "#f00"] },
                    { id: "b3", stops: ["#000", "#f00"] },
                  ]} />
                </ColorTab>
                <ColorTab $on>
                  <GradBars rows={[
                    { id: "c1", stops: ["#e03010", "#ff8060"] },
                    { id: "c2", stops: ["#e06060", "#6060e0"] },
                    { id: "c3", stops: ["#208060", "#60c0a0"] },
                    { id: "c4", stops: ["#00ffff", "#0040ff"] },
                  ]} />
                </ColorTab>
                <ColorTab $on><DotsIcon /></ColorTab>
                <ColorTab><BlobIcon /></ColorTab>
              </ColorTabs>
              <WheelHolder>
                <WheelEdge>
                  <WheelRing>
                    <WheelHole>
                      <ColorSquare><ColorSquareFill /></ColorSquare>
                    </WheelHole>
                  </WheelRing>
                </WheelEdge>
              </WheelHolder>
              <Separator $top={6} />
              {sliders.map((s) => (
                <SliderRow key={s.label} $top={s.top}>
                  <SliderLabel>{s.label}</SliderLabel>
                  <SliderTrack $grad={s.grad} />
                </SliderRow>
              ))}
              <Separator $top={20} />
              {hsv.map((s) => (
                <SliderRow key={s.label} $top={s.top}>
                  <SliderLabel>{s.label}</SliderLabel>
                  <SliderTrack $grad={s.grad} />
                </SliderRow>
              ))}
              <Separator $top={19} />
              <ToolSlider $top={5} />
              <ToolSlider $top={5} />
              <ToolSlider $top={5} />
              <ToolSlider $top={5} />
              <Separator $top={5} />
              <SwatchPanel>
                <SwatchGrid>
                  {Array.from({ length: 36 }, (_, i) => (
                    <Swatch key={i} $color={swatches[i]} />
                  ))}
                </SwatchGrid>
                <ArrowBtn $dir="up" />
              </SwatchPanel>
            </ColorPanel>

            <ToolStrip>
              <ArrowBtn $dir="up" $dark />
              <ArrowBtn $dir="down" $dark />
              <StripTrack />
              <ArrowBtn $dir="down" $dark />
            </ToolStrip>

            <CanvasColumn>
              <ToolRow>
                <ToolBtn $w={34} $off><UndoIcon /></ToolBtn>
                <ToolBtn $w={35} $ml={4} $off><Flip><UndoIcon /></Flip></ToolBtn>
                <ToolBtn $w={34} $ml={12} $off><DashedEraser /></ToolBtn>
                <ToolBtn $w={35} $ml={4} $off><DashedBag /></ToolBtn>
                <EyeBtn><Eye /></EyeBtn>
                <ToolLabel>选择</ToolLabel>
                <SmallSelect $w={93}><SelectValue>12.5%</SelectValue><DropBtn $w={22} /></SmallSelect>
                <ToolBtn $ml={4}><svg width="14" height="4" viewBox="0 0 14 4"><rect width="14" height="4" fill="currentColor" /></svg></ToolBtn>
                <ToolBtn $ml={3}><svg width="14" height="14" viewBox="0 0 14 14"><path d="M5 0H9V5H14V9H9V14H5V9H0V5H5Z" fill="currentColor" /></svg></ToolBtn>
                <ToolBtn $ml={3}><Square /></ToolBtn>
                <SmallSelect $w={96} $ml={12}><SelectValue>0.0°</SelectValue><DropBtn $w={22} /></SmallSelect>
                <ToolBtn $ml={3}><RotateCcw size={14} strokeWidth={3} /></ToolBtn>
                <ToolBtn $ml={3}><RotateCw size={14} strokeWidth={3} /></ToolBtn>
                <ToolBtn $ml={3}><Square /></ToolBtn>
              </ToolRow>
              <CanvasFrame>
                <CanvasArea><Sheet /></CanvasArea>
                <TrackBoxV>
                  <VThumb />
                  <ArrowBtn $dir="up" $dark />
                  <ArrowBtn $dir="down" $dark />
                </TrackBoxV>
                <TrackBox>
                  <HThumb />
                  <ArrowBtn $dir="left" $dark />
                  <ArrowBtn $dir="right" $dark />
                </TrackBox>
              </CanvasFrame>
              <DocRow>
                <DocTab>
                  <DocIcon />
                  <DocName>新建画布3</DocName>
                  <span>13%</span>
                </DocTab>
                <DocScroll>
                  <ArrowBtn $dir="up" $h={20} />
                  <ArrowBtn $dir="down" $h={20} />
                </DocScroll>
              </DocRow>
            </CanvasColumn>
          </Body>
          <StatusBar>
            <Cjk>内存使用量</Cjk>
            <MeterBox $ml={8}>
              <MeterPart $color="#40e0a0" $w={15} />
              <MeterPart $color="#8888ff" $w={5} />
              <MeterText>9% (11%)</MeterText>
            </MeterBox>
            <Cjk>磁盘容量</Cjk>
            <MeterBox $ml={6}>
              <MeterPart $color="#40bfff" $w={105} />
              <MeterText>58%</MeterText>
            </MeterBox>
          </StatusBar>
        </Client>

        <Dialog>
          <DialogHead>
            <DialogTitle $color="#fff">画布大小</DialogTitle>
            <DialogClose>x</DialogClose>
          </DialogHead>
          <DialogBody>
            <TabRow>
              <Tab>尺寸</Tab>
              <Tab $on>扩展</Tab>
            </TabRow>
            <Pane>
              <Hint>请设置上下左右的扩展量。若设置负数则视为缩减。</Hint>
              <ExpandGrid>
                <Field $col={2}>
                  <FieldLabel>上</FieldLabel>
                  <NumInput $narrow>0</NumInput>
                </Field>
                <Field $col={1}>
                  <FieldLabel>左</FieldLabel>
                  <NumInput $focus><Selected>0</Selected></NumInput>
                </Field>
                <Field $col={2}>
                  <FieldLabel />
                  <SelectBox $h={32}><SelectValue>%</SelectValue><DropBtn /></SelectBox>
                </Field>
                <Field $col={3}>
                  <FieldLabel>右</FieldLabel>
                  <NumInput>0</NumInput>
                </Field>
                <Field $col={2}>
                  <FieldLabel>下</FieldLabel>
                  <NumInput $narrow>0</NumInput>
                </Field>
              </ExpandGrid>
              <SectionHead $top={18}>更改前</SectionHead>
              <InfoGroup>
                <InfoRow><InfoKey>像素大小：</InfoKey><InfoValue>4500 × 2800</InfoValue></InfoRow>
                <InfoRow><InfoKey>打印尺寸：</InfoKey><InfoValue>1190.6mm × 740.8mm (96 pixels/inch)</InfoValue></InfoRow>
              </InfoGroup>
              <SectionHead $top={13}>更改后</SectionHead>
              <InfoGroup>
                <InfoRow><InfoKey>像素大小：</InfoKey><InfoValue>4500 × 2800</InfoValue></InfoRow>
                <InfoRow><InfoKey>打印尺寸：</InfoKey><InfoValue>1190.6mm × 740.8mm (96 pixels/inch)</InfoValue></InfoRow>
              </InfoGroup>
            </Pane>
            <DialogFoot>
              <DialogBtn>OK</DialogBtn>
              <DialogBtn>取消</DialogBtn>
            </DialogFoot>
          </DialogBody>
        </Dialog>

        <RedFrame />

        <Watermark>
          <WmFaint>KK下载</WmFaint>
          <WmShield width="36" height="42" viewBox="0 0 36 42" opacity="0.9">
            <path d="M2 10L34 0C30 10 34 26 16 42C4 34 2 22 2 10Z" fill="#7ccb7c" />
            <path d="M20 8L10 20H17L14 30L26 16H19Z" fill="#f4f4d0" />
          </WmShield>
          <WmName>吾爱软件园</WmName>
          <WmUrl>www.52zixue.com</WmUrl>
        </Watermark>
      </Root>
    </>
  );
}
